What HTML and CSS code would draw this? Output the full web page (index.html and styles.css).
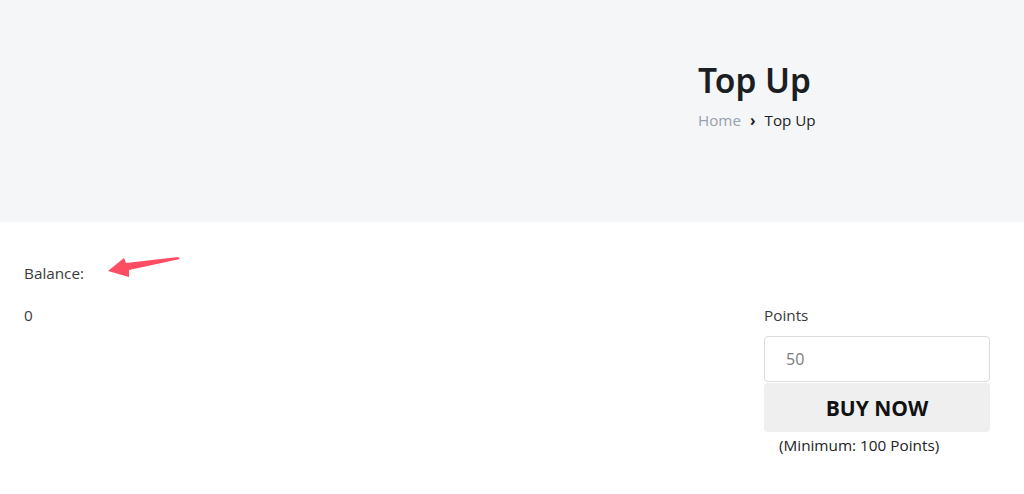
FILE: index.html
```html
<!DOCTYPE html>
<html lang="en">
<head>
<meta charset="UTF-8" />
<meta name="viewport" content="width=device-width, initial-scale=1.0"/>
<title>Top Up</title>
<link rel="stylesheet" href="styles.css">
</head>
<body>

<div id="pageHeader">
  <div class="header-inner">
    <h1 class="page-title">Top Up</h1>
    <div class="breadcrumb">
      <a href="#" class="crumb-link">Home</a>
      <span class="crumb-sep">&rsaquo;</span>
      <span class="crumb-current">Top Up</span>
    </div>
  </div>
</div>

<div id="topupContainer">
  <div class="balance-label">Balance:</div>
  <!-- annotation arrow -->
  <svg class="note-arrow" width="84" height="32" viewBox="0 0 84 32">
    <polygon points="8,21 24,8 26,13 78,7 80,9 29,20 29,27" fill="#fd4d62"/>
  </svg>
  <div class="topup-row">
    <div class="balance-value">0</div>
    <div class="buy-form">
      <label for="pointsInput" class="points-label">Points</label>
      <input type="text" id="pointsInput" placeholder="50" />
      <button id="buyButton">BUY NOW</button>
      <div class="min-note">(Minimum: 100 Points)</div>
    </div>
  </div>
</div>

</body>
</html>
```

FILE: styles.css
```css
body {
  font-family: "Open Sans", Arial, sans-serif;
  font-size: 15px;
  color: #3a3a3a;
  background-color: #fff;
  margin: 0;
}
#pageHeader {
  height: 222px;
  background-color: #f5f6f8;
  display: flex;
  padding-left: 698px;
  box-sizing: border-box;
}
.header-inner {
  padding-top: 58px;
}
.page-title {
  font-family: "Noto Sans", sans-serif;
  font-weight: 600;
  font-size: 33.5px;
  line-height: 44px;
  color: #1b1f24;
  margin: 0 0 8px 0;
}
.breadcrumb {
  font-size: 15.2px;
  line-height: 20px;
  display: flex;
  gap: 9px;
}
.crumb-link {
  color: #97a0ad;
  text-decoration: none;
}
.crumb-sep {
  color: #1b1f24;
  font-weight: 700;
}
.crumb-current {
  color: #1b1f24;
}
#topupContainer {
  position: relative;
  padding: 39px 34px 0 24px;
  font-size: 15.3px;
}
.balance-label {
  line-height: 24px;
}
.note-arrow {
  position: absolute;
  left: 100px;
  top: 28px;
}
.topup-row {
  display: flex;
  justify-content: space-between;
  margin-top: 18px;
}
.balance-value {
  line-height: 24px;
}
.buy-form {
  width: 226px;
  display: flex;
  flex-direction: column;
}
.points-label {
  line-height: 24px;
  margin-bottom: 9px;
}
#pointsInput {
  height: 46px;
  box-sizing: border-box;
  border: 1px solid #dcdcdc;
  border-radius: 4px;
  padding: 0 21px;
  font-family: "Open Sans", Arial, sans-serif;
  font-size: 16px;
  color: #333;
}
#pointsInput::placeholder {
  color: #7b7b7b;
}
#buyButton {
  height: 49px;
  margin-top: 1px;
  border: none;
  border-radius: 4px;
  background-color: #efefef;
  font-family: "Open Sans", Arial, sans-serif;
  font-weight: 700;
  font-size: 21px;
  color: #111;
}
.min-note {
  padding-left: 15px;
  margin-top: 1px;
  line-height: 24px;
  color: #222;
}
```
